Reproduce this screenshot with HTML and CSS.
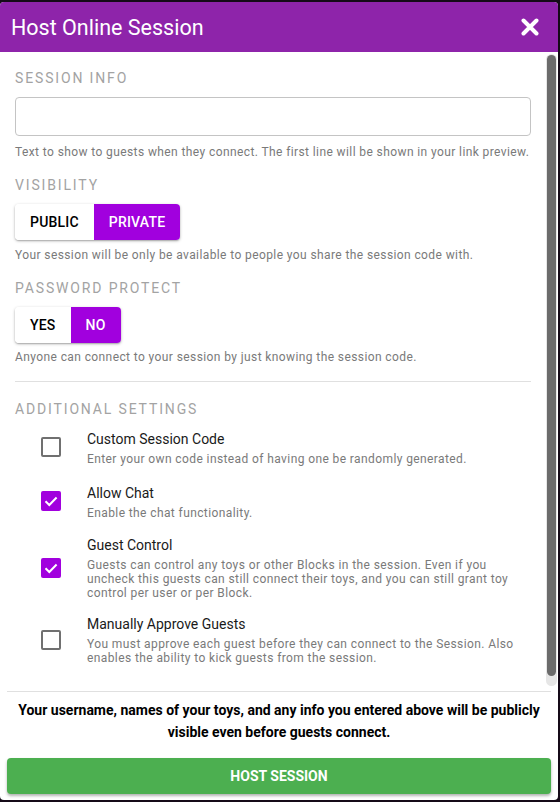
FILE: index.html
```html
<!DOCTYPE html>
<html>
<head>
<meta charset="utf-8">
<link rel="stylesheet" href="styles.css">
</head>
<body>
<div class="dialog">
  <div class="header">
    <div class="title">Host Online Session</div>
    <svg class="close" width="18" height="18" viewBox="0 0 18 18"><path d="M2.5 2.5 L15.5 15.5 M15.5 2.5 L2.5 15.5" stroke="#fff" stroke-width="4" stroke-linecap="round"/></svg>
  </div>
  <div class="body">
    <div class="section first">
      <div class="label">Session Info</div>
      <div class="input"></div>
      <div class="helper">Text to show to guests when they connect. The first line will be shown in your link preview.</div>
    </div>
    <div class="section">
      <div class="label">Visibility</div>
      <div class="toggle">
        <div class="tb">Public</div>
        <div class="tb on">Private</div>
      </div>
      <div class="helper">Your session will be only be available to people you share the session code with.</div>
    </div>
    <div class="section">
      <div class="label">Password Protect</div>
      <div class="toggle">
        <div class="tb">Yes</div>
        <div class="tb on">No</div>
      </div>
      <div class="helper h2">Anyone can connect to your session by just knowing the session code.</div>
    </div>
    <div class="divider"></div>
    <div class="label add">Additional Settings</div>
    <div class="row">
      <div class="cb"></div>
      <div class="rtext">
        <div class="rtitle">Custom Session Code</div>
        <div class="rdesc">Enter your own code instead of having one be randomly generated.</div>
      </div>
    </div>
    <div class="row">
      <div class="cb checked"><svg width="20" height="20" viewBox="0 0 20 20"><path d="M4.5 10.2 L8.3 14 L15.6 6.5" stroke="#fff" stroke-width="2" fill="none"/></svg></div>
      <div class="rtext">
        <div class="rtitle">Allow Chat</div>
        <div class="rdesc">Enable the chat functionality.</div>
      </div>
    </div>
    <div class="row">
      <div class="cb checked"><svg width="20" height="20" viewBox="0 0 20 20"><path d="M4.5 10.2 L8.3 14 L15.6 6.5" stroke="#fff" stroke-width="2" fill="none"/></svg></div>
      <div class="rtext">
        <div class="rtitle">Guest Control</div>
        <div class="rdesc">Guests can control any toys or other Blocks in the session. Even if you uncheck this guests can still connect their toys, and you can still grant toy control per user or per Block.</div>
      </div>
    </div>
    <div class="row">
      <div class="cb"></div>
      <div class="rtext">
        <div class="rtitle">Manually Approve Guests</div>
        <div class="rdesc">You must approve each guest before they can connect to the Session. Also enables the ability to kick guests from the session.</div>
      </div>
    </div>
    <div class="scrollbar"><div class="thumb"></div></div>
  </div>
  <div class="footer">
    <div class="warn">Your username, names of your toys, and any info you entered above will be publicly visible even before guests connect.</div>
    <div class="host">Host Session</div>
  </div>
</div>
</body>
</html>
```

FILE: styles.css
```css
html, body {
  margin: 0;
  padding: 0;
  background: #150a18;
  font-family: Roboto, "Liberation Sans", sans-serif;
}
body {
  padding-top: 2px;
  height: 800px;
  overflow: hidden;
}
.dialog {
  width: 558px;
  height: 798px;
  background: #fff;
  border-radius: 4px;
  overflow: hidden;
  display: flex;
  flex-direction: column;
}
.header {
  height: 50px;
  flex: none;
  background: #8e24aa;
  display: flex;
  align-items: center;
  justify-content: space-between;
  padding: 0 19px 0 11px;
}
.title {
  color: #fff;
  font-size: 21.5px;
  font-weight: 400;
}
.close { display: block; }
.body {
  flex: 1;
  position: relative;
  overflow: hidden;
  padding: 16px 27px 0 15px;
}
.scrollbar {
  position: absolute;
  right: 1px;
  top: 2px;
  width: 11px;
  height: 632px;
  background: #e6e6e6;
  border-radius: 6px;
}
.thumb {
  margin: 1px 1px 0 1px;
  height: 621px;
  background: #6b6b6b;
  border-radius: 5px;
}
.section { margin-top: 15px; }
.section.first { margin-top: 0; }
.label {
  font-size: 14px;
  line-height: 20px;
  letter-spacing: 1.85px;
  text-transform: uppercase;
  color: #a3a3a3;
  margin-bottom: 9px;
}
.input {
  height: 37px;
  border: 1px solid #c4c4c4;
  border-radius: 4px;
}
.helper {
  font-size: 12px;
  line-height: 16px;
  letter-spacing: 0.4px;
  color: #7a7a7a;
  margin-top: 8px;
}
.toggle + .helper { margin-top: 7px; }
.helper.h2 { margin-top: 6px; }
.toggle {
  display: flex;
  width: max-content;
  height: 36px;
  border-radius: 4px;
  box-shadow: 0 1px 3px rgba(0,0,0,0.3), 0 1px 1px rgba(0,0,0,0.12);
  overflow: hidden;
}
.tb {
  padding: 0 15px;
  display: flex;
  align-items: center;
  font-size: 14px;
  font-weight: 500;
  letter-spacing: 0.2px;
  text-transform: uppercase;
  color: #000;
  background: #fff;
}
.tb.on {
  background: #a100de;
  color: #fff;
}
.divider {
  height: 1px;
  background: #e0e0e0;
  margin-top: 16px;
}
.label.add { margin-top: 17px; margin-bottom: 8px; }
.row {
  display: flex;
  align-items: center;
  min-height: 40px;
  margin-bottom: 14px;
}
.cb {
  width: 20px;
  height: 20px;
  box-sizing: border-box;
  border: 2px solid #707070;
  border-radius: 2px;
  margin: 0 26px 0 26px;
  flex: none;
}
.cb.checked {
  border: none;
  background: #a100de;
}
.cb svg { display: block; }
.rtext { flex: 1; }
.rtitle {
  font-size: 14px;
  line-height: 20px;
  color: #1a1a1a;
  margin-bottom: 3px;
}
.rdesc {
  font-size: 12px;
  line-height: 14px;
  letter-spacing: 0.4px;
  color: #7a7a7a;
}
.footer {
  flex: none;
  margin: 0 7px;
  border-top: 1px solid #e0e0e0;
  padding: 7px 0 6px;
}
.warn {
  font-size: 14px;
  font-weight: 700;
  line-height: 22px;
  text-align: center;
  color: #000;
  padding: 0 8px;
  margin-bottom: 15px;
}
.host {
  height: 36px;
  background: #4caf50;
  border-radius: 4px;
  color: #fff;
  font-size: 14px;
  font-weight: 700;
  text-transform: uppercase;
  display: flex;
  align-items: center;
  justify-content: center;
  box-shadow: 0 2px 3px rgba(0,0,0,0.3);
}
```
